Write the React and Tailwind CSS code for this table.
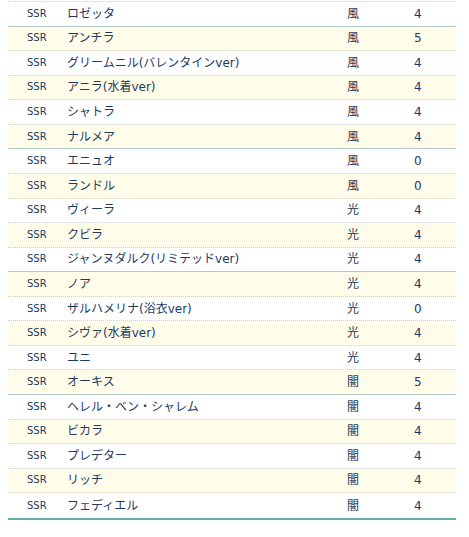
const rows = [
  ['ロゼッタ', '風', 4],
  ['アンチラ', '風', 5],
  ['グリームニル(バレンタインver)', '風', 4],
  ['アニラ(水着ver)', '風', 4],
  ['シャトラ', '風', 4],
  ['ナルメア', '風', 4],
  ['エニュオ', '風', 0],
  ['ランドル', '風', 0],
  ['ヴィーラ', '光', 4],
  ['クビラ', '光', 4],
  ['ジャンヌダルク(リミテッドver)', '光', 4],
  ['ノア', '光', 4],
  ['ザルハメリナ(浴衣ver)', '光', 0],
  ['シヴァ(水着ver)', '光', 4],
  ['ユニ', '光', 4],
  ['オーキス', '闇', 5],
  ['ヘレル・ベン・シャレム', '闇', 4],
  ['ビカラ', '闇', 4],
  ['プレデター', '闇', 4],
  ['リッチ', '闇', 4],
  ['フェディエル', '闇', 4],
];

export default function App() {
  return (
    <div
      className="w-[469px] h-[537px] bg-white pl-2 pr-[13px] pt-px text-[#1e3b5c]"
      style={{ fontFamily: '"DejaVu Sans", "Noto Sans CJK JP", sans-serif' }}
    >
      <div className="border-t border-dotted border-[#cfcfcf]" />
      <div className="border-b-2 border-solid border-[#6aaead]">
        {rows.map(([name, elem, num], i) => {
          const last = i === rows.length - 1;
          const solid = i % 5 === 0 && !last;
          return (
            <div
              key={i}
              className={`grid grid-cols-[59px_280px_67px_1fr] items-center h-[24.57px] ${
                i % 2 === 1 ? 'bg-[#fffcea]' : 'bg-white'
              } ${
                last ? '' : solid ? 'border-b border-solid border-[#b3cbcb]' : 'border-b border-dotted border-[#cfcfcf]'
              }`}
            >
              <span className="pl-[19px] text-[10px] leading-none">SSR</span>
              <span className="text-[12px] leading-none whitespace-nowrap">{name}</span>
              <span className="text-[12px] leading-none">{elem}</span>
              <span className="text-[12px] leading-none">{num}</span>
            </div>
          );
        })}
      </div>
    </div>
  );
}
